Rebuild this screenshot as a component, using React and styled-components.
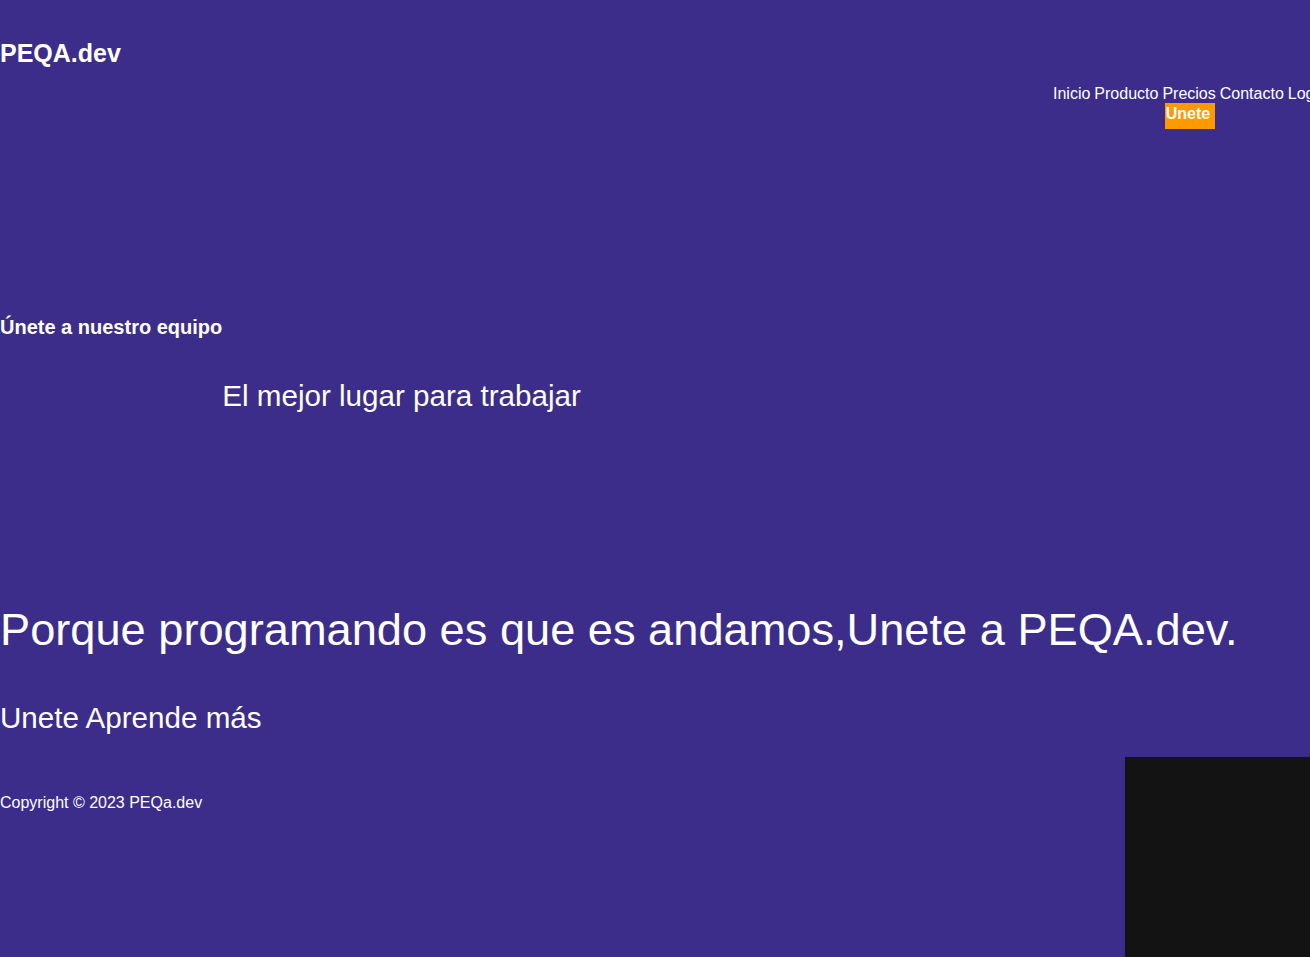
import React from "react";
import styled, { createGlobalStyle } from "styled-components";

const Global = createGlobalStyle`
  html, body { margin: 0; padding: 0; }
  body {
    background: #3c2d8a;
    color: #ffffff;
    font-family: "Liberation Sans", Arial, sans-serif;
    overflow: hidden;
  }
`;

const Page = styled.div`
  position: relative;
  width: 1310px;
  height: 957px;
  overflow: hidden;
  background: #3c2d8a;
`;

const Header = styled.header`
  display: flex;
  justify-content: space-between;
  align-items: flex-start;
`;

const Logo = styled.div`
  font-size: 25px;
  font-weight: 700;
  margin-top: 39px;
  line-height: 28px;
`;

const Nav = styled.nav`
  margin-top: 85px;
  margin-right: -17px;
  width: 274px;
  text-align: center;
  font-size: 16px;
  line-height: 18px;
  white-space: nowrap;
`;

const NavLink = styled.span`
  margin-right: 4px;
`;

const JoinButton = styled.span`
  display: inline-block;
  background: #ff9900;
  color: #fff;
  font-weight: 700;
  padding: 0 5px 5px 1px;
  line-height: 21px;
`;

const Hero = styled.section`
  display: flex;
  align-items: flex-start;
  margin-top: 187px;
`;

const Kicker = styled.h3`
  margin: 0;
  font-size: 20px;
  font-weight: 700;
  line-height: 22px;
`;

const Tagline = styled.h2`
  margin: 62px 0 0;
  font-size: 29.6px;
  font-weight: 400;
  line-height: 36px;
`;

const Headline = styled.h1`
  margin: 189px 0 0;
  font-size: 45.2px;
  font-weight: 400;
  line-height: 54px;
`;

const Actions = styled.div`
  margin-top: 43px;
  font-size: 29.6px;
  line-height: 36px;
`;

const Footer = styled.footer`
  margin-top: 57px;
  font-size: 16px;
  line-height: 20px;
`;

const DarkPanel = styled.div`
  position: absolute;
  left: 1125px;
  top: 757px;
  width: 185px;
  height: 200px;
  background: #131313;
`;

export default function App() {
  return (
    <Page>
      <Global />
      <Header>
        <Logo>PEQA.dev</Logo>
        <Nav>
          <NavLink>Inicio</NavLink>
          <NavLink>Producto</NavLink>
          <NavLink>Precios</NavLink>
          <NavLink>Contacto</NavLink>
          <NavLink>Login</NavLink>
          <br />
          <JoinButton>Unete</JoinButton>
        </Nav>
      </Header>
      <Hero>
        <Kicker>Únete a nuestro equipo</Kicker>
        <Tagline>El mejor lugar para trabajar</Tagline>
      </Hero>
      <Headline>Porque programando es que es andamos,Unete a PEQA.dev.</Headline>
      <Actions>Unete Aprende más</Actions>
      <Footer>Copyright © 2023 PEQa.dev</Footer>
      <DarkPanel />
    </Page>
  );
}
